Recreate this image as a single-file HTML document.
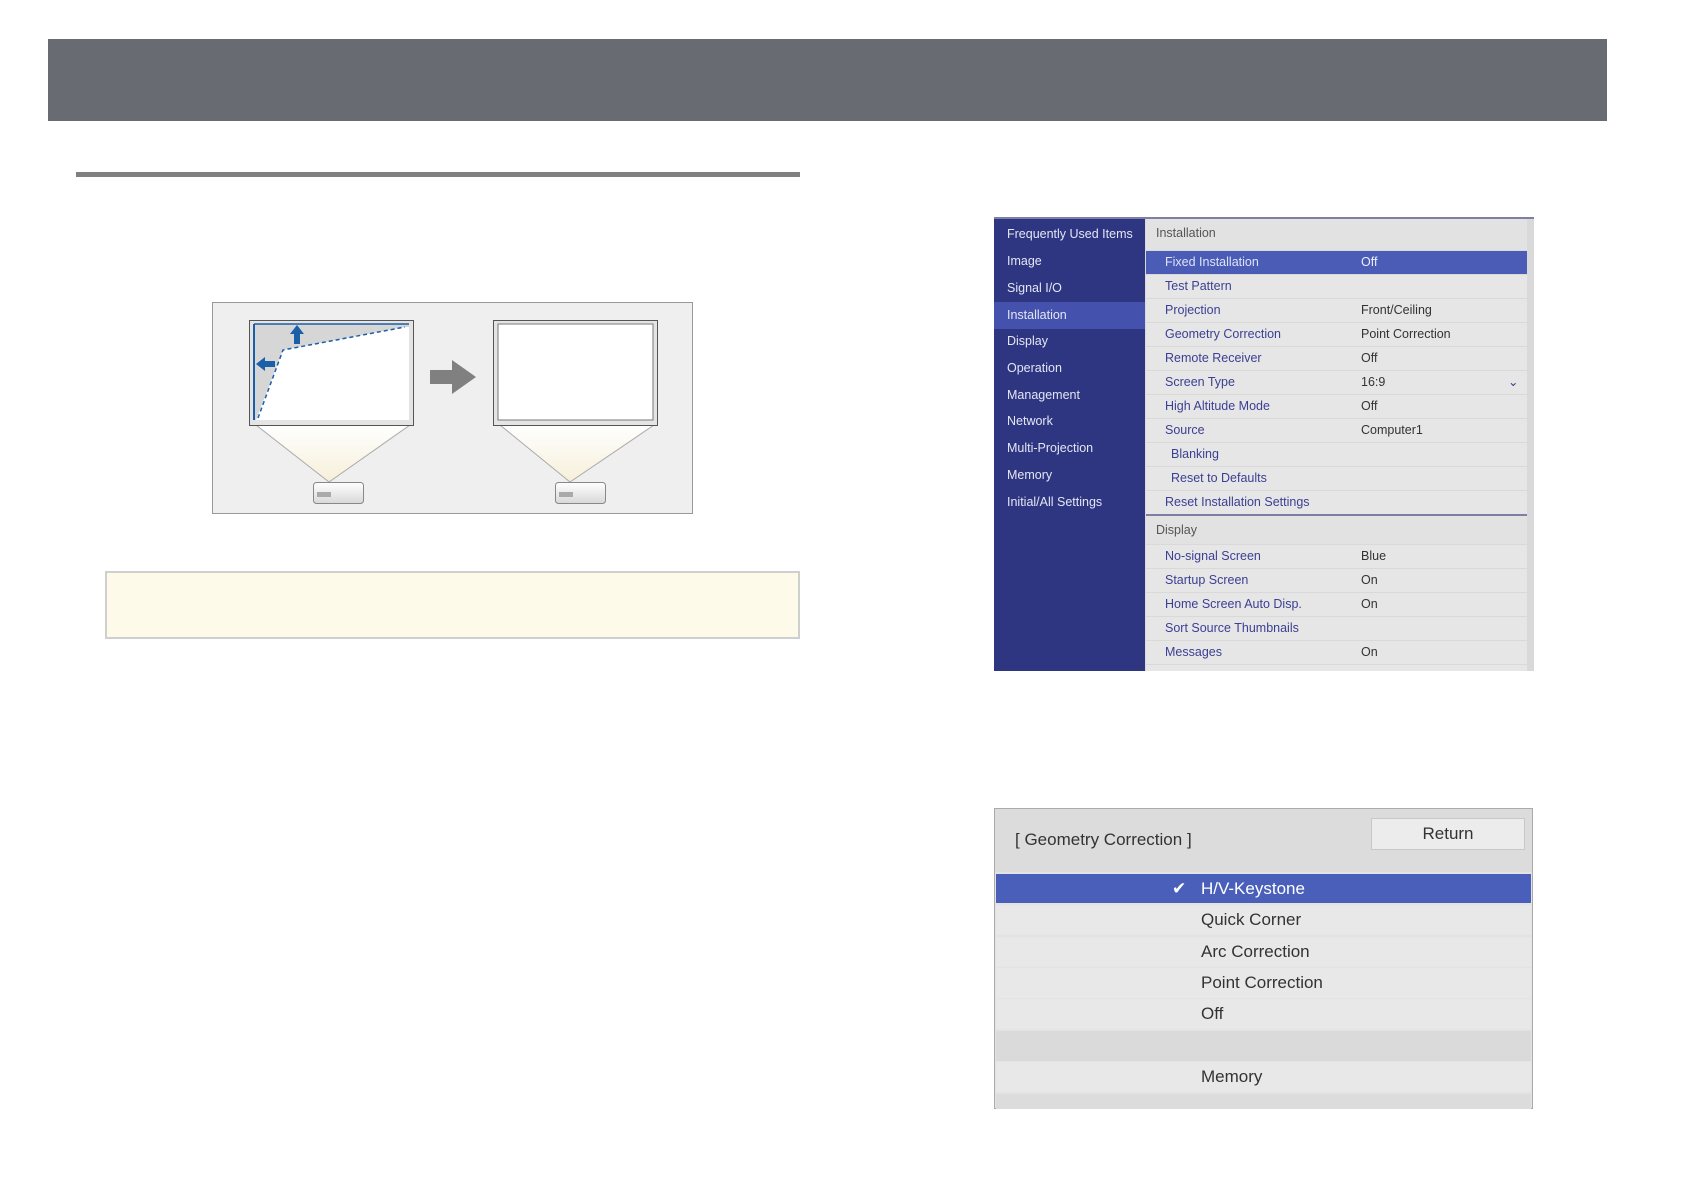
<!DOCTYPE html>
<html><head><meta charset="utf-8"><style>
*{margin:0;padding:0;box-sizing:border-box}
body{width:1684px;height:1190px;background:#fff;position:relative;overflow:hidden;font-family:"Liberation Sans",sans-serif}
.a{position:absolute}
.side div{position:absolute;left:13px;font-size:12.5px;color:#e4e6f4;white-space:nowrap}
.row{position:absolute;left:152px;width:381px;height:23px;background:#e6e6e6;font-size:12.5px;color:#3b3f93;line-height:23px}
.row .l{position:absolute;left:19px}
.row .v{position:absolute;left:215px;color:#333}
.prow{position:absolute;left:1px;width:535px;height:30px;background:#e8e8e8;font-size:17px;color:#333;line-height:30px}
.prow span{position:absolute;left:205px}
</style></head><body>
<div class="a" style="left:48px;top:39px;width:1559px;height:82px;background:#696b72"></div>
<div class="a" style="left:76px;top:172px;width:724px;height:5px;background:#808080"></div>

<div class="a" style="left:212px;top:302px;width:481px;height:212px;background:#efefef;border:1px solid #999">
<svg width="481" height="211" style="position:absolute;left:0;top:0">
<defs><linearGradient id="g" x1="0" y1="0" x2="0" y2="1"><stop offset="0" stop-color="#fff"/><stop offset="1" stop-color="#f6efd9"/></linearGradient>
<linearGradient id="p" x1="0" y1="0" x2="0" y2="1"><stop offset="0" stop-color="#fff"/><stop offset="1" stop-color="#d8d8d8"/></linearGradient></defs>
<g transform="translate(-213,-303)">
<polygon points="256,425 410,425 329,482" fill="url(#g)" stroke="#aaa"/>
<polygon points="500,425 654,425 570,482" fill="url(#g)" stroke="#aaa"/>
<rect x="249.5" y="320.5" width="164" height="105" fill="#e4e4e4" stroke="#555"/>
<rect x="254" y="324" width="155" height="96" fill="#d6d6d6"/>
<polygon points="283,350 405,327 409,327 409,420 256,420" fill="#fff"/>
<path d="M254,324 V420" stroke="#1a5fa8" stroke-width="2"/>
<path d="M254,324 H409" stroke="#1a5fa8" stroke-width="1.5"/>
<path d="M258,418 L283,350 L405,327" stroke="#1a5fa8" stroke-width="1.5" fill="none" stroke-dasharray="4,3"/>
<polygon points="297,325 304,334 300,334 300,344 294,344 294,334 290,334" fill="#1a5fa8"/>
<polygon points="256,364 265,357 265,361 275,361 275,367 265,367 265,371" fill="#1a5fa8"/>
<rect x="493.5" y="320.5" width="164" height="105" fill="#e4e4e4" stroke="#555"/>
<rect x="498" y="324" width="155" height="96" fill="#fff" stroke="#777"/>
<polygon points="430,370 452,370 452,360 476,377 452,394 452,384 430,384" fill="#808080"/>
<rect x="313.5" y="482.5" width="50" height="21" rx="3" fill="url(#p)" stroke="#888"/>
<rect x="317" y="492" width="14" height="5" fill="#aaa"/>
<rect x="555.5" y="482.5" width="50" height="21" rx="3" fill="url(#p)" stroke="#888"/>
<rect x="559" y="492" width="14" height="5" fill="#aaa"/>
</g></svg></div>

<div class="a" style="left:105px;top:571px;width:695px;height:68px;background:#fdfaea;border:2px solid #cfcfcf"></div>

<div class="a" style="left:994px;top:217px;width:540px;height:454px;background:#d9d9d9;border-top:2px solid #7d7fa6;overflow:hidden">
<div class="side a" style="left:0;top:0;width:151px;height:454px;background:#2e3581">
<div style="top:8px">Frequently Used Items</div>
<div style="top:35px">Image</div>
<div style="top:62px">Signal I/O</div>
<div style="top:83px;left:0;width:151px;height:27px;background:#4452ad"></div>
<div style="top:89px">Installation</div>
<div style="top:115px">Display</div>
<div style="top:142px">Operation</div>
<div style="top:169px">Management</div>
<div style="top:195px">Network</div>
<div style="top:222px">Multi-Projection</div>
<div style="top:249px">Memory</div>
<div style="top:276px">Initial/All Settings</div>
</div>
<div class="a" style="left:152px;top:0;width:381px;height:31px;background:#e2e2e2;font-size:12.5px;color:#555;line-height:28px;padding-left:10px">Installation</div>
<div class="row" style="top:32px;background:#4a5cb6;color:#dfe3f7"><span class="l">Fixed Installation</span><span class="v" style="color:#eef">Off</span></div>
<div class="row" style="top:56px"><span class="l">Test Pattern</span></div>
<div class="row" style="top:80px"><span class="l">Projection</span><span class="v">Front/Ceiling</span></div>
<div class="row" style="top:104px"><span class="l">Geometry Correction</span><span class="v">Point Correction</span></div>
<div class="row" style="top:128px"><span class="l">Remote Receiver</span><span class="v">Off</span></div>
<div class="row" style="top:152px"><span class="l">Screen Type</span><span class="v">16:9</span><span style="position:absolute;left:362px;color:#3b3f93">&#8964;</span></div>
<div class="row" style="top:176px"><span class="l">High Altitude Mode</span><span class="v">Off</span></div>
<div class="row" style="top:200px"><span class="l">Source</span><span class="v">Computer1</span></div>
<div class="row" style="top:224px"><span class="l" style="left:25px">Blanking</span></div>
<div class="row" style="top:248px"><span class="l" style="left:25px">Reset to Defaults</span></div>
<div class="row" style="top:272px;border-bottom:2px solid #7d7fa6;height:25px"><span class="l">Reset Installation Settings</span></div>
<div class="a" style="left:152px;top:297px;width:381px;height:28px;background:#e2e2e2;font-size:12.5px;color:#555;line-height:28px;padding-left:10px">Display</div>
<div class="row" style="top:326px"><span class="l">No-signal Screen</span><span class="v">Blue</span></div>
<div class="row" style="top:350px"><span class="l">Startup Screen</span><span class="v">On</span></div>
<div class="row" style="top:374px"><span class="l">Home Screen Auto Disp.</span><span class="v">On</span></div>
<div class="row" style="top:398px"><span class="l">Sort Source Thumbnails</span></div>
<div class="row" style="top:422px"><span class="l">Messages</span><span class="v">On</span></div>
<div class="row" style="top:446px"></div>
</div>

<div class="a" style="left:994px;top:808px;width:539px;height:301px;background:#e3e3e3;border:1px solid #aaa">
<div class="a" style="left:0;top:0;width:537px;height:63px;background:#dcdcdc"></div>
<div class="a" style="left:20px;top:21px;font-size:17px;color:#333">[ Geometry Correction ]</div>
<div class="a" style="left:376px;top:9px;width:154px;height:32px;background:#ececec;border:1px solid #c8c8c8;font-size:17px;color:#333;text-align:center;line-height:29px">Return</div>
<div class="prow" style="top:65px;background:#4a5fba;color:#fff;height:29px"><b style="position:absolute;left:176px;font-weight:normal">&#10004;</b><span>H/V-Keystone</span></div>
<div class="prow" style="top:96px"><span>Quick Corner</span></div>
<div class="prow" style="top:128px"><span>Arc Correction</span></div>
<div class="prow" style="top:159px"><span>Point Correction</span></div>
<div class="prow" style="top:190px"><span>Off</span></div>
<div class="prow" style="top:222px;background:#dadada"></div>
<div class="prow" style="top:253px"><span>Memory</span></div>
<div class="prow" style="top:285px;height:15px;background:#dcdcdc"></div>
</div>
</body></html>
